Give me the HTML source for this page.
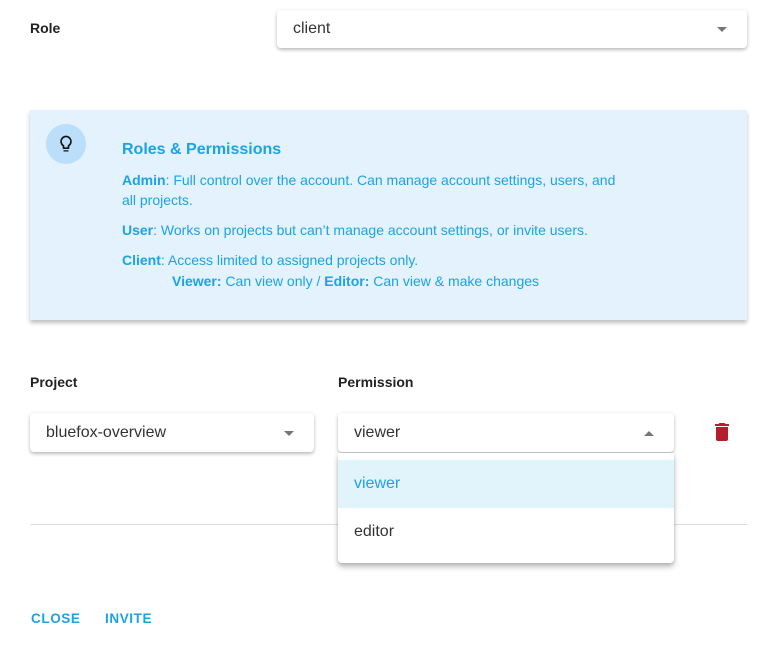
<!DOCTYPE html>
<html><head><style>
*{box-sizing:border-box;margin:0;padding:0}
body{width:770px;height:649px;background:#fff;font-family:"Liberation Sans",sans-serif;position:relative;overflow:hidden;color:#222}
.abs{position:absolute}
.lbl{font-size:14px;font-weight:bold;color:#222}
.sel{background:#fff;border-radius:4px;box-shadow:0 2px 3px rgba(0,0,0,.2),0 1px 5px rgba(0,0,0,.1);font-size:16px;color:#333;padding-left:16px;display:flex;align-items:center}
.arr{position:absolute;right:20px;top:50%;margin-top:-2px;width:0;height:0;border-left:5px solid transparent;border-right:5px solid transparent;border-top:5px solid #757575}
.card{left:30px;top:110px;width:717px;height:210px;background:#e3f2fd;box-shadow:0 3px 4px rgba(0,0,0,.25);color:#1ba3e6;font-size:14px}
.card b{font-weight:bold}
.btn{font-size:13.5px;font-weight:bold;letter-spacing:0.6px;color:#1ba3e6}
</style></head><body>
<div class="abs lbl" style="left:30px;top:20px">Role</div>
<div class="abs sel" style="left:277px;top:10px;width:470px;height:38px">client<span class="arr"></span></div>

<div class="abs card">
  <div class="abs" style="left:16px;top:14px;width:40px;height:40px;border-radius:50%;background:#bbdefb"></div>
  <svg class="abs" style="left:26px;top:24px" width="20" height="20" viewBox="0 0 24 24"><path d="M9 21h6v-1.5H9zM12 2a7 7 0 0 0-4 12.7V17a1 1 0 0 0 1 1h6a1 1 0 0 0 1-1v-2.3A7 7 0 0 0 12 2zm2.8 11.1-.8.6V16h-4v-2.3l-.8-.6A5 5 0 1 1 14.8 13.1z" fill="#111"/></svg>
  <div class="abs" style="left:92px;top:31px;font-size:16px;font-weight:bold">Roles &amp; Permissions</div>
  <div class="abs" style="left:92px;top:60px;width:505px;line-height:20px"><b>Admin</b>: Full control over the account. Can manage account settings, users, and all projects.</div>
  <div class="abs" style="left:92px;top:110px;line-height:20px"><b>User</b>: Works on projects but can’t manage account settings, or invite users.</div>
  <div class="abs" style="left:92px;top:140px;line-height:20px"><b>Client</b>: Access limited to assigned projects only.</div>
  <div class="abs" style="left:142px;top:161px;line-height:20px"><b>Viewer:</b> Can view only / <b>Editor:</b> Can view &amp; make changes</div>
</div>

<div class="abs lbl" style="left:30px;top:374px">Project</div>
<div class="abs lbl" style="left:338px;top:374px">Permission</div>
<div class="abs sel" style="left:30px;top:413px;width:284px;height:39px">bluefox-overview<span class="arr"></span></div>
<div class="abs sel" style="left:338px;top:413px;width:336px;height:39px">viewer<span class="arr" style="border-top:none;border-bottom:5px solid #757575"></span></div>
<svg class="abs" style="left:710px;top:420px" width="24" height="24" viewBox="0 0 24 24"><path d="M6 19a2 2 0 0 0 2 2h8a2 2 0 0 0 2-2V7H6zM19 4h-3.5l-1-1h-5l-1 1H5v2h14z" fill="#b71c2c"/></svg>

<div class="abs" style="left:30px;top:524px;width:717px;height:1px;background:#ddd"></div>

<div class="abs" style="left:338px;top:453px;width:336px;height:110px;background:#fff;border-radius:0 0 4px 4px;box-shadow:0 4px 6px rgba(0,0,0,.25),0 1px 3px rgba(0,0,0,.12)">
  <div class="abs" style="left:0;top:7px;width:336px;height:48px;background:#e1f3fb;color:#1ba3e6;font-size:16px;padding-left:16px;line-height:48px">viewer</div>
  <div class="abs" style="left:16px;top:70px;font-size:16px;color:#333">editor</div>
</div>

<div class="abs btn" style="left:31px;top:611px">CLOSE</div>
<div class="abs btn" style="left:105px;top:611px">INVITE</div>
</body></html>
